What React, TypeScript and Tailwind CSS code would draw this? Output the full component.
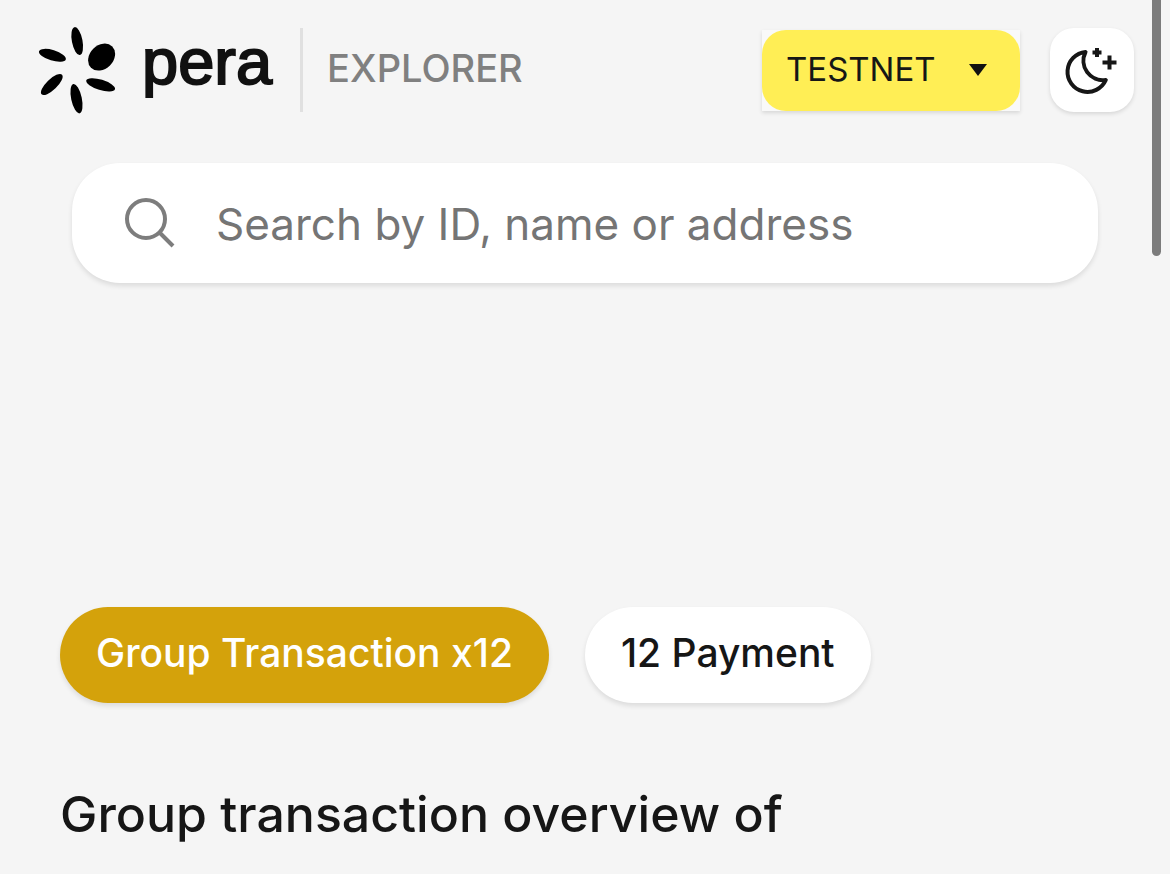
function PeraLogo() {
  return (
    <a href="#" aria-label="Pera home" className="flex items-center gap-[26px]">
      <svg width="80" height="90" viewBox="36 25 80 90" aria-hidden="true">
        <ellipse cx="77.2" cy="41.1" rx="5.3" ry="14.2" transform="rotate(-11 77.2 41.1)" />
        <ellipse cx="101.6" cy="57.1" rx="15" ry="11.8" transform="rotate(-45 101.6 57.1)" />
        <ellipse cx="52.4" cy="55.3" rx="14" ry="5.2" transform="rotate(17 52.4 55.3)" />
        <ellipse cx="51.8" cy="84.5" rx="14.2" ry="5.3" transform="rotate(-44 51.8 84.5)" />
        <ellipse cx="76.5" cy="98.7" rx="5.3" ry="15" transform="rotate(-12 76.5 98.7)" />
        <ellipse cx="100.6" cy="84.8" rx="15" ry="5.2" transform="rotate(17 100.6 84.8)" />
      </svg>
      <span className="pb-4 font-['Liberation_Sans',sans-serif] text-[65px] leading-[72px] text-[#111] [-webkit-text-stroke:2px_#111]">
        pera
      </span>
    </a>
  )
}

function NetworkSelect() {
  return (
    <div className="relative bg-[#f9f9f9] shadow-[0_2px_4px_rgba(0,0,0,0.12)]">
      <select
        aria-label="Network"
        className="block h-[81px] w-[258px] appearance-none rounded-3xl bg-[#ffee55] pb-[2px] pl-6 pr-16 text-[33px] leading-10 text-[#161616]"
      >
        <option>TESTNET</option>
        <option>MAINNET</option>
      </select>
      <svg
        width="18"
        height="12"
        viewBox="0 0 18 12"
        className="pointer-events-none absolute right-[33px] top-[34px]"
        aria-hidden="true"
      >
        <path d="M0 0h18L9 12z" fill="#111" />
      </svg>
    </div>
  )
}

function ThemeButton() {
  return (
    <button
      type="button"
      aria-label="Toggle dark mode"
      className="flex h-[84px] w-[84px] items-center justify-center rounded-3xl bg-white shadow-[0_2px_4px_rgba(0,0,0,0.12)]"
    >
      <svg width="56" height="56" viewBox="0 0 56 56" fill="none" stroke="#161616" aria-hidden="true">
        <path
          d="M21.5 10A20 20 0 1 0 41.8 38A19.5 19.5 0 0 1 21.5 10Z"
          strokeWidth="4"
          strokeLinejoin="round"
        />
        <path d="M33 6v9M28.500 10.500h9" strokeWidth="4" />
        <path d="M45.500 13.500v14M38.500 20.500h14" strokeWidth="4" />
      </svg>
    </button>
  )
}

function SearchBox() {
  return (
    <label className="mx-9 mt-[51px] flex h-[120px] items-center rounded-[48px] bg-white pl-[52px] pr-12 shadow-[0_3px_5px_rgba(0,0,0,0.1)]">
      <svg width="52" height="52" viewBox="0 0 52 52" fill="none" stroke="#7d7d7d" strokeWidth="4" aria-hidden="true">
        <circle cx="22" cy="22" r="19" />
        <path d="M35 35l14 14" />
      </svg>
      <input
        type="text"
        aria-label="Search"
        placeholder="Search by ID, name or address"
        className="ml-10 min-w-0 flex-1 bg-transparent pt-[2px] text-[44px] leading-[56px] outline-none placeholder:text-[#757575]"
      />
    </label>
  )
}

export default function App() {
  return (
    <div className="relative min-h-screen bg-neutral-100 px-9 pt-7 font-['Inter',sans-serif] text-[#161616]">
      <header className="flex h-[84px] items-center">
        <PeraLogo />
        <div className="ml-7 mr-6 h-[84px] w-[3px] bg-[#e0e0e0]" />
        <span className="pb-1 text-[38px] font-medium leading-[48px] text-[#808080]">EXPLORER</span>
        <div className="ml-auto flex items-center gap-[30px]">
          <NetworkSelect />
          <ThemeButton />
        </div>
      </header>

      <SearchBox />

      <main className="mx-6 mt-[324px]">
        <div className="flex gap-9 text-[39px] font-medium leading-[48px]">
          <span className="rounded-full bg-[#d4a20b] px-9 pb-[26px] pt-[22px] text-white shadow-[0_3px_5px_rgba(0,0,0,0.1)]">
            Group Transaction x12
          </span>
          <span className="rounded-full bg-white px-9 pb-[26px] pt-[22px] shadow-[0_3px_5px_rgba(0,0,0,0.1)]">
            12 Payment
          </span>
        </div>
        <h1 className="mt-[79px] text-[50px] font-medium leading-[64px]">Group transaction overview of</h1>
      </main>

      <div className="absolute right-[9px] top-0 h-64 w-[9px] rounded-b-full bg-[#7c7c7c]" />
    </div>
  )
}
